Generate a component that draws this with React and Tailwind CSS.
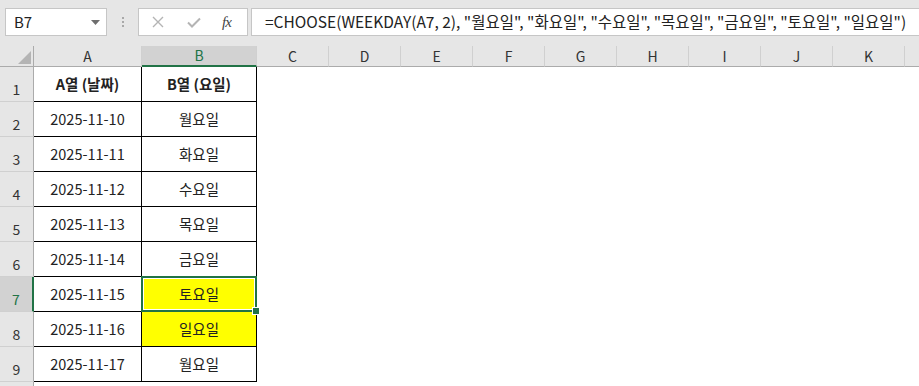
import React from 'react'

const rows = [
  ['A열 (날짜)', 'B열 (요일)'],
  ['2025-11-10', '월요일'],
  ['2025-11-11', '화요일'],
  ['2025-11-12', '수요일'],
  ['2025-11-13', '목요일'],
  ['2025-11-14', '금요일'],
  ['2025-11-15', '토요일'],
  ['2025-11-16', '일요일'],
  ['2025-11-17', '월요일'],
]
const extraCols = ['C', 'D', 'E', 'F', 'G', 'H', 'I', 'J', 'K']
const formula = '=CHOOSE(WEEKDAY(A7, 2), "월요일", "화요일", "수요일", "목요일", "금요일", "토요일", "일요일")'

function FormulaBar() {
  return (
    <div className="h-[46px] bg-[#e6e6e6] flex items-start pt-[8px] pl-[5px]">
      <div className="w-[102px] h-[28px] bg-white border border-[#c6c6c6] flex items-center justify-between pl-[8px] pr-[6px]">
        <span className="text-[15px] text-[#222]">B7</span>
        <svg width="9" height="5" viewBox="0 0 9 5"><path d="M0 0h9L4.5 5z" fill="#6e6e6e" /></svg>
      </div>
      <div className="w-[31px] h-[28px] flex flex-col items-center justify-center gap-[2px]">
        <span className="w-[2px] h-[2px] bg-[#a8a8a8]" />
        <span className="w-[2px] h-[2px] bg-[#a8a8a8]" />
        <span className="w-[2px] h-[2px] bg-[#a8a8a8]" />
      </div>
      <div className="w-[110px] h-[28px] bg-white border border-[#c6c6c6] flex items-center pl-[13px]">
        <svg width="12" height="12" viewBox="0 0 12 12" className="mr-[23px]">
          <path d="M1 1l10 10M11 1L1 11" stroke="#b4b4b4" strokeWidth="1.4" />
        </svg>
        <svg width="14" height="11" viewBox="0 0 14 11" className="mr-[21px]">
          <path d="M1 5.5l4 4L13 1.5" stroke="#b4b4b4" strokeWidth="2" fill="none" />
        </svg>
        <span className="text-[15px] italic text-[#444] font-['Liberation_Serif',serif] tracking-[-1px]">fx</span>
      </div>
      <div className="flex-1 h-[28px] ml-[3px] bg-white border border-r-0 border-[#c6c6c6] flex items-center pl-[13px] overflow-hidden whitespace-nowrap">
        <span className="text-[15.5px] text-[#222]">{formula}</span>
      </div>
    </div>
  )
}

function HeaderRow() {
  return (
    <div className="flex h-[21px] text-[14px] text-[#333]">
      <div className="w-[34px] shrink-0 bg-[#e6e6e6] border-r border-b border-[#ababab] relative">
        <svg width="13" height="13" viewBox="0 0 13 13" className="absolute right-[2px] bottom-[2px]">
          <path d="M13 0V13H0z" fill="#b4b4b4" />
        </svg>
      </div>
      <div className="w-[108px] shrink-0 bg-[#e6e6e6] border-r border-[#d0d0d0] border-b border-b-[#ababab] flex items-center justify-center">A</div>
      <div className="w-[115px] shrink-0 bg-[#d2d2d2] border-r border-[#d0d0d0] border-b-2 border-b-[#217346] text-[#217346] flex items-center justify-center">B</div>
      {extraCols.map(c => (
        <div key={c} className="w-[72px] shrink-0 bg-[#e6e6e6] border-r border-[#d0d0d0] border-b border-b-[#ababab] flex items-center justify-center">{c}</div>
      ))}
      <div className="flex-1 bg-[#e6e6e6] border-b border-[#ababab]" />
    </div>
  )
}

function DataRow({ n, a, b }) {
  const selected = n === 7
  const yellow = n === 7 || n === 8
  const head = n === 1
  return (
    <div className="flex h-[35px] text-[14.5px] text-[#222]">
      <div
        className={`w-[34px] shrink-0 border-b border-b-[#d0d0d0] flex items-end justify-center pb-[1px] text-[14px] ${
          selected ? 'bg-[#d2d2d2] text-[#217346] border-r-2 border-r-[#217346]' : 'bg-[#e6e6e6] text-[#333] border-r border-r-[#ababab]'
        }`}
      >
        {n}
      </div>
      <div className={`w-[108px] shrink-0 border-r border-b border-black flex items-center justify-center ${head ? 'font-bold' : ''}`}>
        {a}
      </div>
      <div
        className={`w-[115px] shrink-0 border-r border-b border-black flex items-center justify-center relative ${
          yellow ? 'bg-[#ffff00]' : 'bg-white'
        } ${head ? 'font-bold' : ''}`}
      >
        {b}
        {selected && (
          <div className="absolute z-10 -left-[1px] -top-[1px] -right-[1px] -bottom-[1px] border-2 border-[#217346]">
            <div className="absolute inset-0 border border-white" />
            <div className="absolute -right-[5px] -bottom-[5px] w-[8px] h-[8px] bg-[#217346] border border-white" />
          </div>
        )}
      </div>
      <div className="flex-1 bg-white" />
    </div>
  )
}

export default function App() {
  return (
    <div className="w-[919px] h-[386px] overflow-hidden bg-white font-['Noto_Sans_CJK_KR','Noto_Sans',sans-serif]">
      <FormulaBar />
      <HeaderRow />
      {rows.map((r, i) => (
        <DataRow key={i} n={i + 1} a={r[0]} b={r[1]} />
      ))}
      <div className="flex h-[10px]">
        <div className="w-[34px] bg-[#e6e6e6] border-r border-[#ababab]" />
        <div className="flex-1 bg-white" />
      </div>
    </div>
  )
}
